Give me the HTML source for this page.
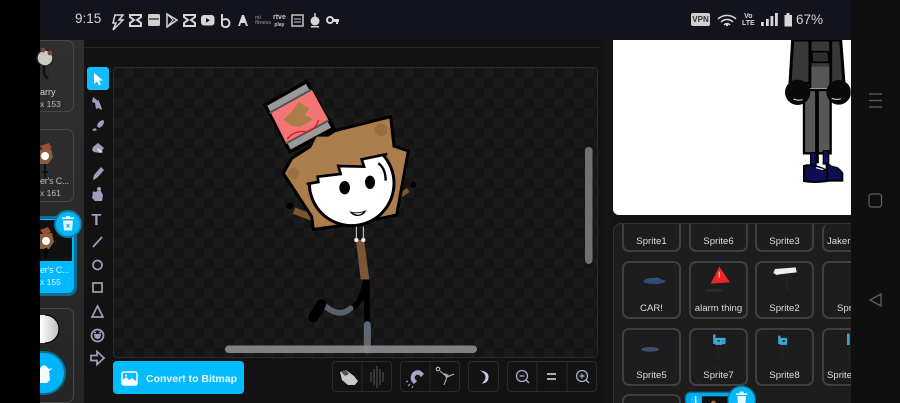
<!DOCTYPE html>
<html><head><meta charset="utf-8">
<style>
html,body{margin:0;padding:0;background:#000;width:900px;height:403px;overflow:hidden}
#r{position:relative;width:900px;height:403px;overflow:hidden;background:#121212;font-family:"Liberation Sans",sans-serif}
#r div,#r span{position:absolute}
.t{color:#dcdcdc;font-size:9.6px;text-align:center;white-space:nowrap;line-height:12px}
.c{border:2px solid #3f403f;border-radius:7px;box-sizing:border-box;width:59px;height:58px;background:#1c1d1c}
.top{top:0;height:28px;border-top:0;border-radius:0 0 7px 7px}
.right{width:29px;border-right:0;border-radius:7px 0 0 7px}
.last{top:170px;height:9px;border-bottom:0;border-radius:7px 7px 0 0}
.lt{color:#cfcfcf;font-size:9px;line-height:12px;white-space:nowrap}
svg{position:absolute;left:0;top:0}
</style></head><body>
<div id="r">
<div style="left:851px;top:0;width:49px;height:403px;background:#0f0f0f"></div>
<div style="left:40px;top:40px;width:44px;height:363px;background:linear-gradient(#2e2f2e,#252625)"></div>
<div style="left:84px;top:40px;width:520px;height:363px;background:#121212"></div>
<div style="left:604px;top:40px;width:9px;height:363px;background:#151515"></div>
<!-- canvas -->
<div style="left:113px;top:67px;width:483px;height:289px;border:1px solid #2b2b2b;border-radius:4px;background-color:#151515;background-image:linear-gradient(45deg,#1b1b1b 25%,transparent 25%,transparent 75%,#1b1b1b 75%),linear-gradient(45deg,#1b1b1b 25%,transparent 25%,transparent 75%,#1b1b1b 75%);background-size:20px 20px;background-position:0 0,10px 10px"></div>
<div style="left:84px;top:47px;width:516px;height:1px;background:#262626"></div>
<!-- stage -->
<div style="left:613px;top:40px;width:238px;height:175px;background:#fff;border-radius:0 0 0 6px"></div>
<!-- sprite panel -->
<div style="left:613px;top:223px;width:238px;height:180px;border:1px solid #333;border-width:1px 0 0 1px;border-radius:8px 0 0 0;box-sizing:border-box;background:#1c1d1c"></div>

<div style="left:613px;top:224px;width:238px;height:179px;overflow:hidden">
 <div class="c top" style="left:9px"></div><div class="c top" style="left:76px"></div><div class="c top" style="left:142px"></div><div class="c top right" style="left:209px"></div>
 <div class="c" style="left:9px;top:37px"></div><div class="c" style="left:76px;top:37px"></div><div class="c" style="left:142px;top:37px"></div><div class="c right" style="left:209px;top:37px"></div>
 <div class="c" style="left:9px;top:104px"></div><div class="c" style="left:76px;top:104px"></div><div class="c" style="left:142px;top:104px"></div><div class="c right" style="left:209px;top:104px"></div>
 <div class="c last" style="left:9px"></div>
 <div class="t" style="left:9px;top:12px;width:59px">Sprite1</div><div class="t" style="left:76px;top:12px;width:59px">Sprite6</div><div class="t" style="left:142px;top:12px;width:59px">Sprite3</div><div class="t" style="left:214px;top:12px;width:24px;overflow:hidden;text-align:left">Jaker</div>
 <div class="t" style="left:9px;top:79px;width:59px">CAR!</div><div class="t" style="left:76px;top:79px;width:59px">alarm thing</div><div class="t" style="left:142px;top:79px;width:59px">Sprite2</div><div class="t" style="left:224px;top:79px;width:14px;overflow:hidden;text-align:left">Spr</div>
 <div class="t" style="left:9px;top:146px;width:59px">Sprite5</div><div class="t" style="left:76px;top:146px;width:59px">Sprite7</div><div class="t" style="left:142px;top:146px;width:59px">Sprite8</div><div class="t" style="left:214px;top:146px;width:24px;overflow:hidden;text-align:left">Sprite</div>
</div>

<!-- left cards -->
<div style="left:30px;top:40px;width:44px;height:72px;border:1px solid #484848;border-radius:7px;box-sizing:border-box"></div>
<div style="left:30px;top:129px;width:44px;height:73px;border:1px solid #484848;border-radius:7px;box-sizing:border-box"></div>
<div style="left:30px;top:308px;width:44px;height:95px;border:1px solid #484848;border-radius:7px;box-sizing:border-box"></div>
<div style="left:30px;top:216px;width:47px;height:80px;border:3px solid #0b6f93;border-radius:9px;box-sizing:border-box;background:#00b8ff"></div>
<div style="left:33px;top:220px;width:39px;height:41px;background:#101010"></div>
<div class="lt" style="left:40px;top:86px">arry</div>
<div class="lt" style="left:40px;top:98px;font-size:8.5px;color:#b8b8b8">x 153</div>
<div class="lt" style="left:40px;top:175px;color:#bbb;letter-spacing:-.2px">er's C...</div>
<div class="lt" style="left:40px;top:187px;font-size:8.5px;color:#b8b8b8">x 161</div>
<div class="lt" style="left:40px;top:264px;color:#d8f3ff;letter-spacing:-.2px">er's C...</div>
<div class="lt" style="left:40px;top:276px;font-size:8.5px;color:#d8f3ff">x 155</div>
<div style="left:0;top:0;width:40px;height:403px;background:#000"></div>

<div style="left:87px;top:67px;width:22px;height:23px;background:#10bdff;border-radius:3px"></div>
<div style="left:113px;top:361px;width:131px;height:33px;background:#02bcff;border-radius:4px"></div>
<div style="left:146px;top:373px;color:#e9f8ff;font-size:10.5px;font-weight:bold;line-height:13px;white-space:nowrap">Convert to Bitmap</div>

<div style="left:332px;top:361px;width:60px;height:31px;border:1px solid #2a2a2a;border-radius:4px;box-sizing:border-box"></div>
<div style="left:400px;top:361px;width:60px;height:31px;border:1px solid #2a2a2a;border-radius:4px;box-sizing:border-box"></div>
<div style="left:468px;top:361px;width:31px;height:31px;border:1px solid #2a2a2a;border-radius:4px;box-sizing:border-box"></div>
<div style="left:507px;top:361px;width:90px;height:31px;border:1px solid #2a2a2a;border-radius:4px;box-sizing:border-box"></div>

<!-- status bar -->
<div style="left:40px;top:0;width:811px;height:40px;background:#12131c"></div>
<div style="left:75px;top:11px;color:#d6d6d6;font-size:13.5px;line-height:16px">9:15</div>
<div style="left:796px;top:12px;color:#d6d6d6;font-size:13.5px;line-height:16px">67%</div>
<div style="left:691px;top:13px;width:19px;height:13px;background:#cfcfcf;border-radius:2px;color:#333;font-size:8px;font-weight:bold;line-height:13px;text-align:center">VPN</div>
<div style="left:742px;top:13px;color:#d6d6d6;font-size:7px;font-weight:bold;line-height:7px;text-align:center">Vo<br>LTE</div>
<div style="left:273px;top:14px;color:#c4c4c4;font-size:7px;line-height:7px;white-space:nowrap;font-weight:bold;text-align:center">rtve<br><span style="position:static;font-size:5px">play</span></div>
<div style="left:255px;top:16px;color:#7a7a7a;font-size:5px;line-height:5px;white-space:nowrap;font-weight:bold">mi<br>fitness</div>

<svg width="900" height="403" viewBox="0 0 900 403">
 <!-- status icons -->
 <g fill="#d6d6d6" stroke="none">
  <path d="M115 15h8l-4 5h4l-10 10 3-7h-3z" fill="none" stroke="#d6d6d6" stroke-width="1.500"/>
  <path d="M130 15h11v2l-4 3 4 3v3h-11v-3l4-3-4-3z" fill="none" stroke="#d6d6d6" stroke-width="2"/>
  <rect x="148" y="14" width="12" height="12" rx="1.500" fill="#d0d0d0"/><rect x="149" y="18" width="10" height="2" fill="#666"/>
  <path d="M167 14l10 6-10 7z" fill="none" stroke="#d6d6d6" stroke-width="1.500"/><path d="M167 14l6 6-6 7" fill="none" stroke="#d6d6d6" stroke-width="1"/>
  <path d="M184 15h11v2l-4 3 4 3v3h-11v-3l4-3-4-3z" fill="none" stroke="#d6d6d6" stroke-width="2"/>
  <rect x="201" y="15" width="13.500" height="10.500" rx="3"/><path d="M206 18l4 2.300-4 2.300z" fill="#12131c"/>
  <path d="M222 14v11a4 4 0 1 0 1-5" fill="none" stroke="#d6d6d6" stroke-width="2"/>
  <path d="M238 26l4-11h2l4 11h-2l-1-3h-4l-1 3z"/>
  <rect x="292" y="15" width="11" height="11" fill="none" stroke="#c4c4c4" stroke-width="1.500"/><path d="M294 19h7M294 22h7" stroke="#c4c4c4"/>
  <circle cx="315" cy="21" r="4.500"/><rect x="314.300" y="13" width="1.400" height="6"/><rect x="311" y="26" width="8" height="1.500"/>
  <circle cx="330" cy="20" r="3" fill="none" stroke="#d6d6d6" stroke-width="2"/><path d="M333 19h6v3h-1v2h-2v-2h-3z"/>
 </g>
 <g fill="none" stroke="#d6d6d6" stroke-width="1.500">
  <path d="M718 19a13 13 0 0 1 18 0M721 22a8.500 8.500 0 0 1 12 0M724 25a4 4 0 0 1 6 0"/>
 </g>
 <g fill="#d6d6d6">
  <circle cx="727" cy="25" r="1.200"/>
  <rect x="761" y="22" width="2.800" height="4"/><rect x="766" y="19" width="2.800" height="7"/><rect x="770.500" y="16" width="2.800" height="10"/><rect x="775" y="13" width="2.800" height="13"/>
  <path d="M785 15h2v-2h3v2h2.500v11.500h-7.500z" transform="translate(-.5 0)"/>
 </g>
 <!-- nav -->
 <g fill="none" stroke="#5f5f5f" stroke-width="1.300">
  <path d="M869 94h13M869 100.500h13M869 107h13"/>
  <rect x="869" y="194" width="12.500" height="13" rx="2.500"/>
  <path d="M881 294v12l-11-6z"/>
 </g>
 <!-- stage figure -->
 <g transform="translate(600 0) scale(.33333)">
  <clipPath id="sc"><rect x="0" y="120" width="752" height="530"/></clipPath>
  <g clip-path="url(#sc)">
   <path d="M578 120L570 250H732L722 120z" fill="#383838" stroke="#000" stroke-width="9"/>
   <path d="M630 120V265M692 120V245" stroke="#000" stroke-width="9"/>
   <path d="M636 155h48l4 32h-52z" fill="#2e2e2e" stroke="#000" stroke-width="5"/>
   <rect x="634" y="200" width="54" height="65" fill="#565656"/>
   <rect x="612" y="270" width="80" height="190" fill="#585858" stroke="#000" stroke-width="7"/>
   <path d="M651 270V490" stroke="#000" stroke-width="11"/>
   <circle cx="593" cy="277" r="38" fill="#0a0a0a"/><circle cx="716" cy="277" r="37" fill="#0a0a0a"/>
   <path d="M580 297q14 6 28 2M695 295q14 6 28 1" stroke="#ddd" stroke-width="3" fill="none"/>
   <path d="M632 458h16v40h-16zM670 452h16v40h-16z" fill="#11115a" stroke="#000" stroke-width="4"/>
   <path d="M680 495q30 0 47 25v22h-47z" fill="#0e0e55" stroke="#000" stroke-width="6"/>
   <path d="M612 498q30-8 70 15v30q-40 6-70 0z" fill="#0e0e55" stroke="#000" stroke-width="6"/>
   <path d="M648 503l22 6M692 494l18 5" stroke="#eee" stroke-width="4"/>
  </g>
 </g>
 <!-- sprite thumbnails -->
 <g transform="translate(600 215) scale(.33333)">
  <ellipse cx="163" cy="199" rx="33" ry="8" fill="#2f4a75"/><path d="M145 190l30-2 8 6h-50z" fill="#3a5783"/>
  <path d="M358 155l32 47-58 4z" fill="#e8262c"/><rect x="356" y="170" width="4" height="18" fill="#f5d040"/><rect x="320" y="222" width="48" height="8" fill="#2a2a2a"/>
  <path d="M525 162l62-5 3 15-52 6-8 2-10-6z" fill="#eee"/><path d="M560 180v55" stroke="#222" stroke-width="5"/><path d="M548 205h24" stroke="#222" stroke-width="3"/><circle cx="561" cy="237" r="5" fill="#141438"/>
  <ellipse cx="150" cy="403" rx="26" ry="7" fill="#3a5070"/>
  <path d="M343 358v25h22M349 372h14v14h-14zM365 372h8v12h-8z" fill="none" stroke="#3aa8cf" stroke-width="7"/><path d="M353 390v45" stroke="#222" stroke-width="5"/><circle cx="353" cy="438" r="5" fill="#141438"/>
  <path d="M538 362v22h20M544 372h14v14h-14z" fill="none" stroke="#3aa8cf" stroke-width="7"/><path d="M546 390v45" stroke="#222" stroke-width="5"/>
  <path d="M745 356v34" stroke="#3aa8cf" stroke-width="8"/><path d="M748 395v40" stroke="#222" stroke-width="5"/>
  <path d="M353 30l-6 10M347 30l6 10" stroke="#223" stroke-width="2"/>
  <rect x="256" y="532" width="190" height="40" rx="16" fill="#00a8ee" stroke="#0b6f93" stroke-width="4"/>
  <rect x="306" y="544" width="80" height="30" fill="#111"/>
  <circle cx="287" cy="556" r="15" fill="#10b8ff"/><rect x="285" y="552" width="4" height="12" fill="#fff"/><circle cx="287" cy="547" r="2.500" fill="#fff"/>
  <circle cx="340" cy="564" r="7" fill="#a06a45"/>
  <circle cx="425" cy="555" r="41" fill="#07b7fb" stroke="#0b7ea6" stroke-width="4"/>
  <path d="M408 535h34v5h-34zM412 543h26l-2 28h-22z M419 530h12v5h-12z" fill="#e9f8ff"/>
 </g>
 <!-- left thumbs -->
 <g>
  <circle cx="45" cy="58" r="8" fill="#cfc9c3" stroke="#222" stroke-width="1.500"/><circle cx="43" cy="50" r="2.500" fill="#7a4a3e"/><circle cx="50" cy="53" r="2.500" fill="#7a4a3e"/><path d="M44 66v8M44 74l4 5" stroke="#111" stroke-width="2.500"/>
  <path d="M40 146l9-3 3 5-8 3z" fill="#a04a38"/><path d="M40 150l11-1 2 8-5 7h-8z" fill="#8a5f3a"/><circle cx="45" cy="156" r="4" fill="#fff"/><path d="M45 164v14M42 172l6 0" stroke="#111" stroke-width="2"/>
  <path d="M40 230l8-3 3 5-7 3z" fill="#a04a38"/><path d="M40 234l12-1 2 9-5 7h-9z" fill="#8a5f3a"/><circle cx="46" cy="241" r="4" fill="#fff"/><path d="M46 248v11" stroke="#000" stroke-width="2.500"/>
  <circle cx="68" cy="224" r="13" fill="#07b7fb" stroke="#0b7ea6" stroke-width="2"/>
  <path d="M62 217.500h12v1.500h-12zM63 220.500h10l-1 10h-8zM66 216h4v1.500h-4z" fill="#e9f8ff"/><path d="M66.500 224l3 3.500M69.500 224l-3 3.500" stroke="#07b7fb" stroke-width="1.200"/>
  <defs><linearGradient id="wb" x1="0" x2="1"><stop offset="0" stop-color="#fff"/><stop offset="1" stop-color="#bdbdbd"/></linearGradient></defs>
  <path d="M40 315h5a14 14 0 0 1 0 28h-5z" fill="url(#wb)"/><path d="M45 315a14 14 0 0 1 0 28" fill="none" stroke="#000" stroke-width="1.200"/>
  <path d="M40 351h4a22 22 0 0 1 0 44h-4z" fill="#0b6f93"/>
  <path d="M40 353h4a20 20 0 0 1 0 40h-4z" fill="#00b4fb"/>
  <path d="M40 369q2-5 6-3l3 3 4-1-4 3 1 9-3 3h-7z" fill="#f2fbff"/>
 </g>
 <!-- toolbar icons -->
 <g fill="#9ca0bf">
  <path d="M94 73l0 11 3-2.500 2 4 2-1-2-4h4z" fill="#fff"/>
  <path d="M93 97l5 4 0-2 3 7 1 4-4-2-2 1-1-6-3-1z"/>
  <path d="M103 120q-5 1-6 6l2 2q5-2 5-7zM95 128l-3 2 2 1 3-1z"/>
  <path d="M93 147l5-4 6 5-4 5-6-1-2-2z"/><path d="M98 148l5 4-2 1-4-3z" fill="#d8d8e8"/>
  <path d="M101 167l3 3-7 8-4 2 1-5z"/>
  <path d="M93 193l7-3 3 5-1 6h-7l-3-3z"/><circle cx="99" cy="189" r="2"/><circle cx="94" cy="193" r="1.500"/>
  <text x="91.500" y="225" font-family="Liberation Sans" font-size="16" font-weight="bold" fill="#9ca0bf">T</text>
 </g>
 <g fill="none" stroke="#9ca0bf" stroke-width="1.700">
  <path d="M93 247l9-10"/>
  <circle cx="97.500" cy="265" r="4.500"/>
  <rect x="93" y="283" width="9" height="9"/>
  <path d="M97.500 306l5.500 11h-11z"/>
  <circle cx="97.500" cy="335.500" r="6"/>
  <path d="M91 355.500h6v-4l7 6.500-7 6.500v-4h-6z"/>
 </g>
 <path d="M94 334h7q0 5-3.500 5t-3.500-5z" fill="#9ca0bf"/><circle cx="95" cy="332.500" r="1" fill="#9ca0bf"/><circle cx="100" cy="332.500" r="1" fill="#9ca0bf"/>
 <!-- character -->
 <g transform="translate(250 70) scale(.33333)" stroke-linejoin="miter">
  <path d="M132 422l58 22" stroke="#7d5430" stroke-width="20"/>
  <circle cx="120" cy="408" r="10" fill="#000"/>
  <path d="M445 380l30-20" stroke="#7d5430" stroke-width="14"/>
  <circle cx="490" cy="345" r="9" fill="#000"/>
  <path d="M170 35L250 175 120 245 45 105z" fill="#9a9a9a" stroke="#000" stroke-width="10"/>
  <path d="M62 127L186 60 236 151 109 221z" fill="#f57575"/>
  <path d="M58 129L184 59M107 221L236 151" stroke="#555" stroke-width="6"/>
  <path d="M100 150L128 122 145 95 178 115 165 135 190 148 150 170 125 168z" fill="#ab7c4c"/>
  <path d="M112 207q20-25 50-22t44-35" fill="none" stroke="#e8101c" stroke-width="4"/>
  <path d="M125 265L255 182 422 140 432 228 475 243 440 435 310 462 190 478 185 440 100 310z" fill="#ab7c4c" stroke="#000" stroke-width="9"/>
  <circle cx="393" cy="180" r="19" fill="#9a6c3f"/><circle cx="130" cy="310" r="16" fill="#9a6c3f"/><circle cx="370" cy="215" r="5" fill="#9a6c3f"/>
  <circle cx="305" cy="340" r="127" fill="#fff" stroke="#000" stroke-width="9"/>
  <path d="M170 342L205 336 203 322 270 310 265 290 340 290 335 270 412 252 410 200 200 200 150 300z" fill="#ab7c4c"/>
  <path d="M170 342L205 336 203 320 272 312 265 288 342 290 335 268 412 252" fill="none" stroke="#000" stroke-width="8"/>
  <path d="M385 280q22 15 22 52" fill="none" stroke="#000" stroke-width="7"/>
  <ellipse cx="284" cy="353" rx="16" ry="20" fill="#000"/><ellipse cx="360" cy="337" rx="15" ry="20" fill="#000"/>
  <path d="M298 424q25 8 52-4q-10 20-30 18q-14-2-22-14z" fill="#000"/><path d="M308 428q18 4 32-2q-10 10-20 8z" fill="#eee"/>
 </g>
 <g transform="translate(280 220) scale(.33333)" fill="none">
  <path d="M228 60L252 60 268 178 242 178z" fill="#7c5634"/>
  <path d="M229 20v40M250 20v40" stroke="#ddd" stroke-width="3"/>
  <circle cx="229" cy="60" r="6.500" fill="#eee"/><circle cx="250" cy="60" r="6.500" fill="#eee"/>
  <path d="M258 180Q245 255 212 265" stroke="#000" stroke-width="18"/>
  <path d="M260 180L262 315" stroke="#000" stroke-width="18"/>
  <path d="M135 258Q178 295 212 265" stroke="#57616c" stroke-width="17" stroke-linecap="round"/>
  <path d="M100 292L124 252" stroke="#000" stroke-width="30" stroke-linecap="round"/>
  <path d="M262 314V390" stroke="#5c6975" stroke-width="21" stroke-linecap="round"/>
 </g>
 <!-- scrollbars -->
 <rect x="225" y="345.500" width="252" height="7.500" rx="3.700" fill="#8b8b8b" fill-opacity=".92"/>
 <rect x="585" y="147" width="7.500" height="117" rx="3.700" fill="#707070"/>
 <!-- bottom controls -->
 <g>
  <rect x="122" y="372" width="15" height="13" rx="2" fill="none" stroke="#fff" stroke-width="1.500"/>
  <path d="M122 385v-4l4-4 3 3 3-2 5 4v3z" fill="#fff"/><circle cx="126" cy="375.500" r="1" fill="#fff"/>
  <path d="M340 372l6-2 8 6 4 5-3 4h-7l-6-5z" fill="#c9c9d0"/><path d="M341 372l5-2 3 4-4 2z" fill="#555"/>
  <path d="M362 361.500v30" stroke="#2a2a2a"/>
  <path d="M371 372v10M374 369v16M377 366v22M380 369v16M383 372v10" stroke="#4c4c4c" stroke-width="1.200"/>
  <path d="M430 361.500v30M537 361.500v30M567 361.500v30" stroke="#2a2a2a"/>
  <path d="M411 376a7 7 0 0 1 10-5l3 3-3 3-2-2a3 3 0 0 0-4 4l2 2-3 3-2-2q-2-3-1-6z" fill="#a4a8d0"/>
  <path d="M408 381l-2 1M410 384l-2 2M413 386l-1 2" stroke="#a4a8d0"/>
  <circle cx="438" cy="369" r="1.800" fill="none" stroke="#ccc"/><path d="M440 371l7 6M447 377l7-3M447 377l-3 8" stroke="#bbb"/><path d="M444 373l5 2-3 3z" fill="#a4a8d0"/>
  <path d="M480 370.500q9 1 8.500 7t-7 6q4-3 4-6.500t-5.500-6.500z" fill="#c7cae8"/>
  <circle cx="522" cy="376" r="5.500" fill="none" stroke="#a8acc8" stroke-width="1.300"/><path d="M519.500 376h5M526 380l3 3" stroke="#a8acc8" stroke-width="1.300"/>
  <path d="M547 374h9M547 379h9" stroke="#c0c0d0" stroke-width="1.800"/>
  <circle cx="582" cy="376" r="5.500" fill="none" stroke="#a8acc8" stroke-width="1.300"/><path d="M579.500 376h5M582 373.500v5M586 380l3 3" stroke="#a8acc8" stroke-width="1.300"/>
 </g>
</svg>
</div>
</body></html>
